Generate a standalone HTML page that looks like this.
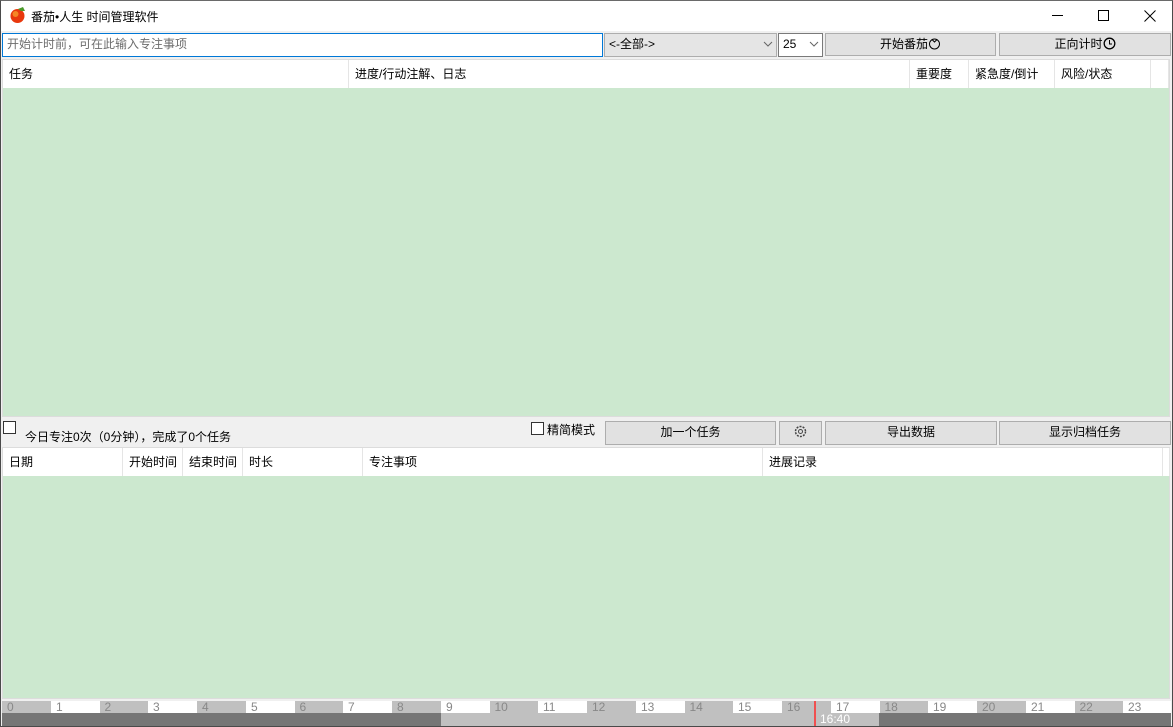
<!DOCTYPE html>
<html><head><meta charset="utf-8"><style>
*{box-sizing:border-box;margin:0;padding:0}
body{width:1173px;height:727px;position:relative;overflow:hidden;background:#f0f0f0;font-family:"Liberation Sans","Noto Sans CJK SC",sans-serif;font-size:12px;color:#000}
.a{position:absolute}
.btn{position:absolute;background:#e1e1e1;border:1px solid #adadad;text-align:center;line-height:21px;font-size:12px}
.hd{position:absolute;top:0;height:100%;border-right:1px solid #e5e5e5;padding-left:6px;line-height:28px;background:#fff}
.seg{position:absolute;top:701px;height:12px;font-size:12px;line-height:12px;color:#888;padding-left:5px}
</style></head><body>
<div class="a" style="left:0;top:0;width:1173px;height:727px;border:1px solid #4a4a4a;border-top:1px solid #6a6a6a"></div>
<div class="a" style="left:1px;top:1px;width:1171px;height:30px;background:#fff"></div>
<svg class="a" style="left:9px;top:6px" width="18" height="18" viewBox="0 0 18 18"><circle cx="8.5" cy="10" r="7" fill="#e8380d"/><circle cx="6.5" cy="8" r="3" fill="#f79a2a" opacity=".8"/><path d="M9 3 L14 1 L16 5 L12 5 Z" fill="#4a9a2a"/></svg>
<div class="a" style="left:31px;top:8px;font-size:12px">番茄•人生 时间管理软件</div>
<div class="a" style="left:1052px;top:15px;width:11px;height:1px;background:#000"></div>
<div class="a" style="left:1098px;top:10px;width:11px;height:11px;border:1px solid #000"></div>
<svg class="a" style="left:1144px;top:10px" width="12" height="12"><path d="M0.5 0.5L11.5 11.5M11.5 0.5L0.5 11.5" stroke="#000" stroke-width="1"/></svg>
<div class="a" style="left:2px;top:33px;width:601px;height:24px;background:#fff;border:1px solid #0078d7;color:#6d6d6d;padding-left:4px;line-height:21px">开始计时前，可在此输入专注事项</div>
<div class="a" style="left:604px;top:33px;width:173px;height:24px;background:#e5e5e5;border:1px solid #adadad;padding-left:4px;line-height:21px">&lt;-全部-&gt;</div>
<svg class="a" style="left:763px;top:41px" width="10" height="6"><path d="M1 1L5 5L9 1" stroke="#666" fill="none"/></svg>
<div class="a" style="left:778px;top:33px;width:45px;height:24px;background:#fff;border:1px solid #7a7a7a;padding-left:4px;line-height:21px">25</div>
<svg class="a" style="left:809px;top:41px" width="10" height="6"><path d="M1 1L5 5L9 1" stroke="#666" fill="none"/></svg>
<div class="btn" style="left:825px;top:33px;width:171px;height:23px">开始番茄<svg width="13" height="13" style="vertical-align:-2px"><circle cx="6.5" cy="7" r="5" stroke="#000" fill="none"/><path d="M4 2.5L6.5 5L9 2.5" stroke="#000" fill="none"/></svg></div>
<div class="btn" style="left:999px;top:33px;width:172px;height:23px">正向计时<svg width="13" height="13" style="vertical-align:-2px"><circle cx="6.5" cy="6.5" r="5.3" stroke="#000" stroke-width="1.3" fill="none"/><path d="M6.5 3V7H9" stroke="#000" fill="none"/></svg></div>
<div class="a" style="left:2px;top:59px;width:1168px;height:358px;background:#cce8cf;border:1px solid #dcdcdc"></div>
<div class="a" style="left:3px;top:60px;width:1166px;height:28px;background:#fff">
<div class="hd" style="left:0;width:346px">任务</div>
<div class="hd" style="left:346px;width:561px">进度/行动注解、日志</div>
<div class="hd" style="left:907px;width:59px">重要度</div>
<div class="hd" style="left:966px;width:86px">紧急度/倒计</div>
<div class="hd" style="left:1052px;width:96px">风险/状态</div>
<div class="hd" style="left:1148px;width:18px"></div>
</div>
<div class="a" style="left:3px;top:421px;width:13px;height:13px;border:1px solid #333;background:#fff"></div>
<div class="a" style="left:25px;top:428px">今日专注0次（0分钟），完成了0个任务</div>
<div class="a" style="left:531px;top:422px;width:13px;height:13px;border:1px solid #333;background:#fff"></div>
<div class="a" style="left:547px;top:421px">精简模式</div>
<div class="btn" style="left:605px;top:421px;width:171px;height:24px">加一个任务</div>
<div class="btn" style="left:779px;top:421px;width:43px;height:24px"><svg width="13" height="13" style="vertical-align:-2px"><circle cx="6.5" cy="6.5" r="5" stroke="#444" stroke-dasharray="2 1.2" stroke-width="1.5" fill="none"/><circle cx="6.5" cy="6.5" r="2" stroke="#444" fill="none"/></svg></div>
<div class="btn" style="left:825px;top:421px;width:172px;height:24px">导出数据</div>
<div class="btn" style="left:999px;top:421px;width:172px;height:24px">显示归档任务</div>
<div class="a" style="left:2px;top:447px;width:1168px;height:252px;background:#cce8cf;border:1px solid #dcdcdc"></div>
<div class="a" style="left:3px;top:448px;width:1166px;height:28px;background:#fff">
<div class="hd" style="left:0;width:120px">日期</div>
<div class="hd" style="left:120px;width:60px">开始时间</div>
<div class="hd" style="left:180px;width:60px">结束时间</div>
<div class="hd" style="left:240px;width:120px">时长</div>
<div class="hd" style="left:360px;width:400px">专注事项</div>
<div class="hd" style="left:760px;width:400px">进展记录</div>
<div class="hd" style="left:1160px;width:6px"></div>
</div>
<div class="seg" style="left:2px;width:49px;background:#c0c0c0">0</div><div class="seg" style="left:51px;width:49px;background:#fff">1</div><div class="seg" style="left:99.5px;width:49px;background:#c0c0c0">2</div><div class="seg" style="left:148px;width:49px;background:#fff">3</div><div class="seg" style="left:197px;width:49px;background:#c0c0c0">4</div><div class="seg" style="left:246px;width:49px;background:#fff">5</div><div class="seg" style="left:294.5px;width:49px;background:#c0c0c0">6</div><div class="seg" style="left:343px;width:49px;background:#fff">7</div><div class="seg" style="left:392px;width:49px;background:#c0c0c0">8</div><div class="seg" style="left:441px;width:49px;background:#fff">9</div><div class="seg" style="left:489.5px;width:49px;background:#c0c0c0">10</div><div class="seg" style="left:538px;width:49px;background:#fff">11</div><div class="seg" style="left:587px;width:49px;background:#c0c0c0">12</div><div class="seg" style="left:636px;width:49px;background:#fff">13</div><div class="seg" style="left:684.5px;width:49px;background:#c0c0c0">14</div><div class="seg" style="left:733px;width:49px;background:#fff">15</div><div class="seg" style="left:782px;width:49px;background:#c0c0c0">16</div><div class="seg" style="left:831px;width:49px;background:#fff">17</div><div class="seg" style="left:879.5px;width:49px;background:#c0c0c0">18</div><div class="seg" style="left:928px;width:49px;background:#fff">19</div><div class="seg" style="left:977px;width:49px;background:#c0c0c0">20</div><div class="seg" style="left:1026px;width:49px;background:#fff">21</div><div class="seg" style="left:1074.5px;width:49px;background:#c0c0c0">22</div><div class="seg" style="left:1123px;width:48px;background:#fff">23</div>
<div class="a" style="left:2px;top:713px;width:439px;height:13px;background:#767676"></div>
<div class="a" style="left:441px;top:713px;width:438px;height:13px;background:#c0c0c0"></div>
<div class="a" style="left:879px;top:713px;width:292px;height:13px;background:#767676"></div>
<div class="a" style="left:814px;top:701px;width:2px;height:25px;background:#f05050"></div>
<div class="a" style="left:820px;top:713px;color:#fff;font-size:12px;line-height:13px">16:40</div>
</body></html>
